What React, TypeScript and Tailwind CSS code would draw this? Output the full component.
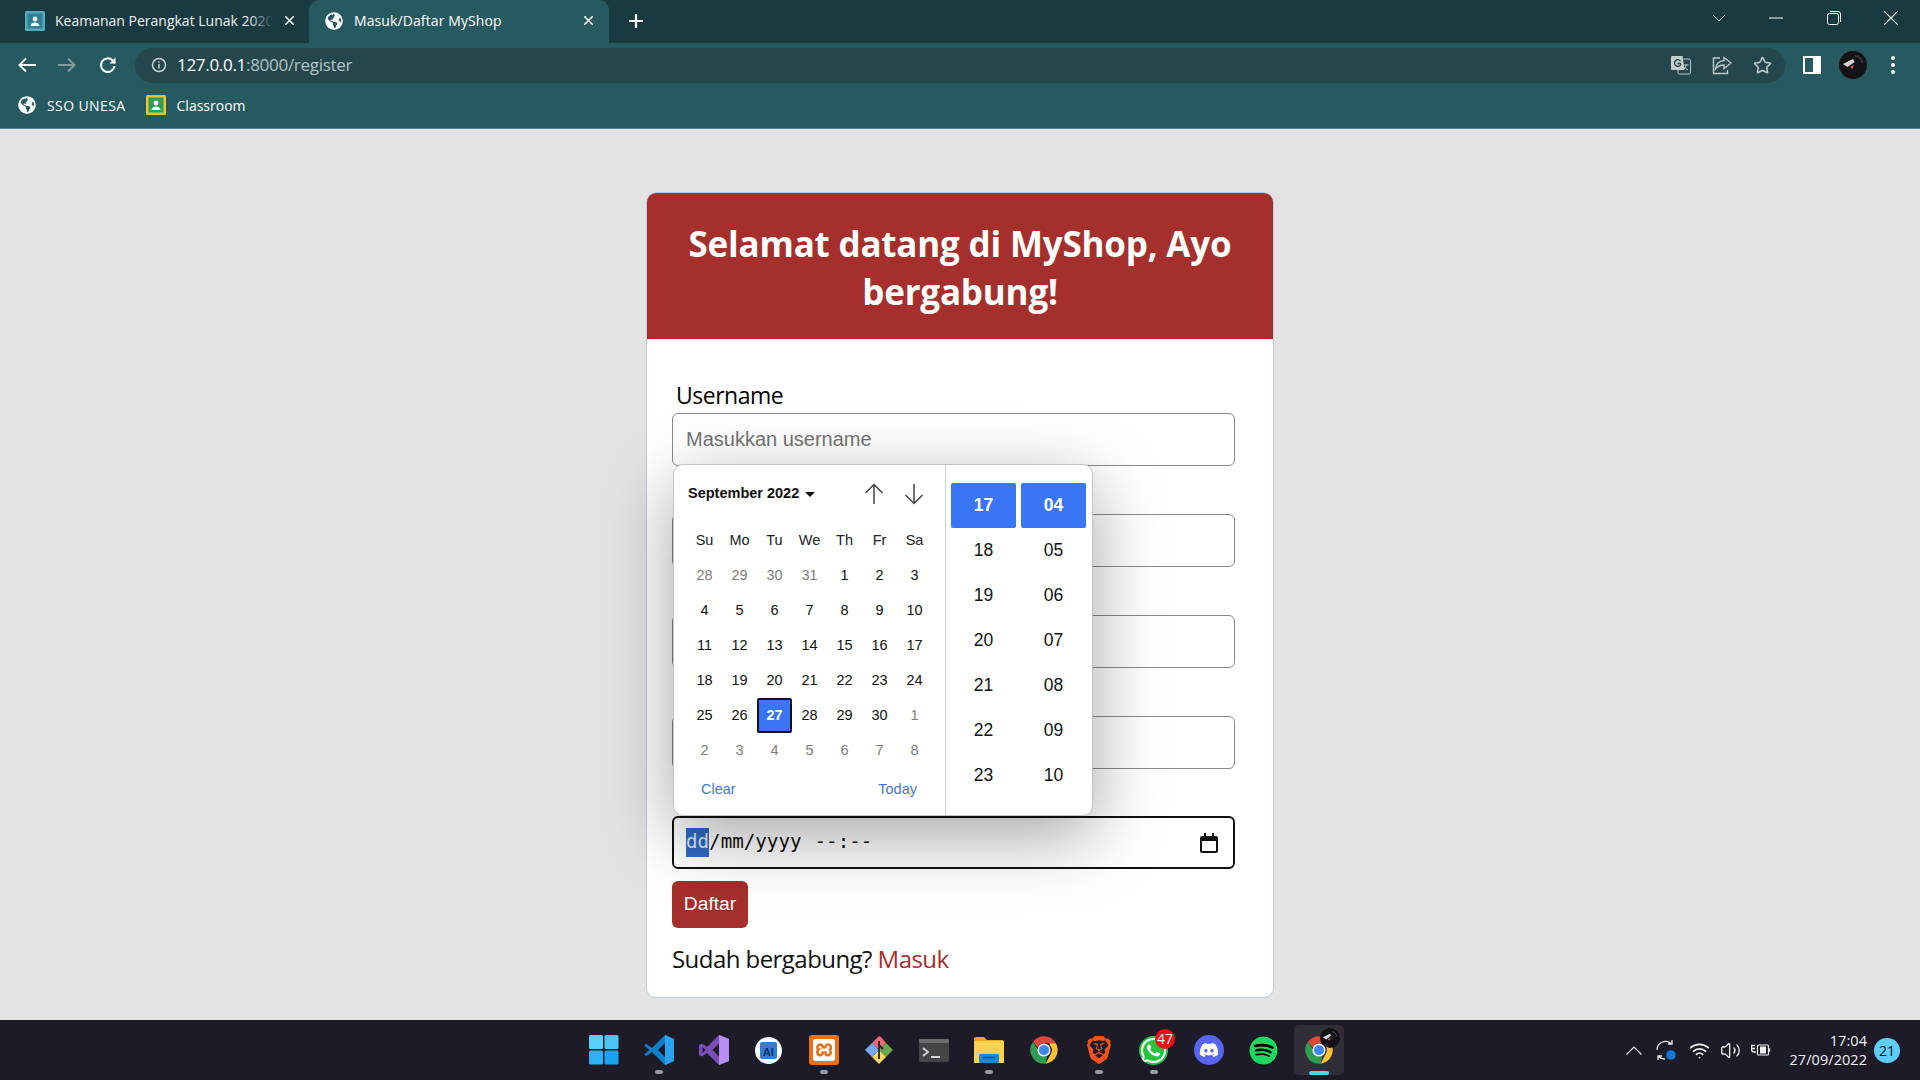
import { FaDiscord, FaGlobeAmericas, FaSpotify, FaWhatsapp } from "react-icons/fa";
import { SiBrave, SiXampp } from "react-icons/si";
import { Star, Volume2, Wifi, X } from "lucide-react";

const segoe = "font-['Open_Sans','Noto_Sans',sans-serif]";
const arial = "font-['Liberation_Sans',Arial,sans-serif]";

const weeks = [
  ["28", "29", "30", "31", "1", "2", "3"],
  ["4", "5", "6", "7", "8", "9", "10"],
  ["11", "12", "13", "14", "15", "16", "17"],
  ["18", "19", "20", "21", "22", "23", "24"],
  ["25", "26", "27", "28", "29", "30", "1"],
  ["2", "3", "4", "5", "6", "7", "8"],
];

function ClassroomIcon({ frame }: { frame: string }) {
  return (
    <svg width="20" height="20" viewBox="0 0 20 20">
      <rect width="20" height="20" rx="1.5" fill={frame} />
      <rect x="2.5" y="2.5" width="15" height="15" fill={frame === "#f2c230" ? "#2f9e5c" : "#2f7f96"} />
      <circle cx="10" cy="8" r="2.4" fill="#fff" />
      <path d="M5.5 15c.4-2.6 2.2-3.6 4.5-3.6s4.1 1 4.5 3.6z" fill="#fff" />
    </svg>
  );
}

function ChromeIcon({ size = 30 }: { size?: number }) {
  return (
    <svg width={size} height={size} viewBox="0 0 48 48">
      <path d="M24 2a22 22 0 0 1 19 11H24a11 11 0 0 0-10.200 6.900L6.500 10.800A22 22 0 0 1 24 2z" fill="#e0483a" />
      <path d="M43 13a22 22 0 0 1-16.500 32.900L34.900 30A11 11 0 0 0 33 16.500V13z" fill="#f6c236" />
      <path d="M6.500 10.800 15 24.800A11 11 0 0 0 29 33.800L26.500 45.900A22 22 0 0 1 6.500 10.800z" fill="#2f9e50" />
      <circle cx="24" cy="24" r="10.500" fill="#fff" />
      <circle cx="24" cy="24" r="8.200" fill="#3f86ee" />
    </svg>
  );
}

function Avatar({ size }: { size: number }) {
  return (
    <svg width={size} height={size} viewBox="0 0 28 28">
      <circle cx="14" cy="14" r="14" fill="#131215" />
      <path d="M4 13l10-5 1.500 3-7 5z" fill="#d7d7da" />
      <path d="M11 16l4-2-1.500 4z" fill="#d9534f" />
      <path d="M16 5c4 0 6.500 3 7.500 7" stroke="#3c3a40" strokeWidth="1.800" fill="none" />
    </svg>
  );
}

function TaskItem({ children, mark, active }: { children: React.ReactNode; mark?: boolean; active?: boolean }) {
  return (
    <div className="relative flex h-[60px] w-[55px] items-center justify-center">
      {active && <div className="absolute left-[3px] top-[5px] h-[50px] w-[50px] rounded-[5px] bg-[#312e3a]" />}
      <div className="relative flex items-center justify-center">{children}</div>
      {mark && <div className="absolute bottom-[6px] left-[24px] h-[4px] w-[8px] rounded-full bg-[#9b99a1]" />}
      {active && <div className="absolute bottom-[5px] left-[18px] h-[4px] w-[20px] rounded-full bg-[#60cdff]" />}
    </div>
  );
}

function Field({ placeholder, className }: { placeholder?: string; className?: string }) {
  return (
    <input
      placeholder={placeholder}
      className={`block h-[53px] w-[563px] rounded-[6px] border border-[#8a8a8a] bg-white px-[13px] text-[20px] outline-none placeholder:text-[#757575] ${arial} ${className ?? ""}`}
    />
  );
}

function DatePopup() {
  return (
    <div className={`absolute bottom-full left-[-1px] mb-[2px] flex h-[352px] w-[420px] rounded-[10px] border border-[#c4c4c4] bg-white shadow-[0_20px_70px_rgba(0,0,0,0.36)] ${arial}`}>
      <div className="w-[272px] border-r border-[#cfcfcf] pl-[13px]">
        <div className="flex h-[58px] items-center pl-[1px]">
          <span className="text-[14.500px] font-bold text-[#111]">September 2022</span>
          <svg className="ml-[6px]" width="10" height="5" viewBox="0 0 10 5">
            <path d="M0 0h10L5 5z" fill="#111" />
          </svg>
          <div className="ml-auto flex gap-[20px] pr-[21px] text-[#444]">
            <svg width="20" height="22" viewBox="0 0 20 22" fill="none" stroke="currentColor" strokeWidth="1.500">
              <path d="M10 21V1.500M1.500 10 10 1.500l8.500 8.500" />
            </svg>
            <svg width="20" height="22" viewBox="0 0 20 22" fill="none" stroke="currentColor" strokeWidth="1.500">
              <path d="M10 1v19.500M1.500 12l8.500 8.500 8.500-8.500" />
            </svg>
          </div>
        </div>
        <div className="grid w-[245px] grid-cols-7 text-center text-[14.500px]">
          {["Su", "Mo", "Tu", "We", "Th", "Fr", "Sa"].map((d) => (
            <div key={d} className="flex h-[35px] items-center justify-center text-[#222]">
              {d}
            </div>
          ))}
          {weeks.map((week, w) =>
            week.map((d, i) => {
              const muted = (w === 0 && i < 4) || (w === 4 && i === 6) || w === 5;
              if (w === 4 && i === 2) {
                return (
                  <div key={d + w} className="flex h-[35px] items-center justify-center rounded-[2px] border-2 border-[#111] bg-[#3a75f6] font-bold text-white">
                    {d}
                  </div>
                );
              }
              return (
                <div key={d + w + i} className={`flex h-[35px] items-center justify-center ${muted ? "text-[#7d7d7d]" : "text-[#111]"}`}>
                  {d}
                </div>
              );
            }),
          )}
        </div>
        <div className="flex h-[44px] w-[245px] items-center justify-between pl-[14px] pr-[15px] text-[14.500px] text-[#4a76c9]">
          <span>Clear</span>
          <span>Today</span>
        </div>
      </div>
      <div className="flex gap-[5px] pl-[5px] pt-[18px] text-[17.500px] text-[#111]">
        {[
          ["17", "18", "19", "20", "21", "22", "23"],
          ["04", "05", "06", "07", "08", "09", "10"],
        ].map((col) => (
          <div key={col[0]} className="w-[65px]">
            {col.map((n, i) => (
              <div key={n} className={`flex h-[45px] items-center justify-center rounded-[2px] ${i === 0 ? "bg-[#3a75f6] font-bold text-white" : ""}`}>
                {n}
              </div>
            ))}
          </div>
        ))}
      </div>
    </div>
  );
}

export default function App() {
  return (
    <div className="flex h-screen flex-col overflow-hidden bg-[#e3e3e3]">
      {/* browser chrome */}
      <div className={`bg-[#275a60] text-white ${segoe}`}>
        <div className="flex h-[43px] items-center bg-[#193a40]">
          <div className="flex h-[43px] w-[309px] items-center pb-[2px] pl-[25px]">
            <ClassroomIcon frame="#54aabd" />
            <div className="relative ml-[10px] w-[218px] overflow-hidden whitespace-nowrap text-[14px] text-[#eef3f4]">
              Keamanan Perangkat Lunak 2020
              <div className="absolute right-0 top-0 h-full w-[24px] bg-gradient-to-r from-transparent to-[#193a40]" />
            </div>
            <X size={15} strokeWidth={2.500} className="ml-[9px]" />
          </div>
          <div className="flex h-[43px] w-[300px] items-center rounded-t-[10px] bg-[#275a60] pb-[2px] pl-[16px]">
            <FaGlobeAmericas size={18} />
            <span className="ml-[11px] w-[227px] whitespace-nowrap text-[14px] tracking-[0.1px]">Masuk/Daftar MyShop</span>
            <X size={15} strokeWidth={2.500} />
          </div>
          <svg className="mb-[2px] ml-[19px]" width="16" height="16" viewBox="0 0 16 16" stroke="#fff" strokeWidth="2.200">
            <path d="M8 1v14M1 8h14" />
          </svg>
          <div className="mb-[7px] ml-auto flex items-center pr-[22px] text-white">
            <svg width="14" height="8" viewBox="0 0 14 8" fill="none" stroke="#d5dde0" strokeWidth="1">
              <path d="M1 1l6 6 6-6" />
            </svg>
            <svg className="ml-[43px]" width="14" height="2" viewBox="0 0 14 2" stroke="#fff">
              <path d="M0 1h14" />
            </svg>
            <svg className="ml-[44px]" width="14" height="14" viewBox="0 0 14 14" fill="none" stroke="#fff">
              <rect x=".5" y="2.500" width="11" height="11" rx="2" />
              <path d="M3 .5h8a2.500 2.500 0 0 1 2.500 2.500v8" />
            </svg>
            <svg className="ml-[43px]" width="14" height="14" viewBox="0 0 14 14" stroke="#fff" strokeWidth="1.100">
              <path d="M0 0l14 14M14 0 0 14" />
            </svg>
          </div>
        </div>
        <div className="flex h-[46px] items-center pl-[18px] pb-[2px]">
          <svg width="18" height="16" viewBox="0 0 18 16" fill="none" stroke="#fff" strokeWidth="2">
            <path d="M18 8H2M8 1.500 1.500 8 8 14.500" />
          </svg>
          <svg className="ml-[22px]" width="18" height="16" viewBox="0 0 18 16" fill="none" stroke="#7f9ca0" strokeWidth="2">
            <path d="M0 8h16M10 1.500 16.500 8 10 14.500" />
          </svg>
          <svg className="ml-[23px]" width="18" height="18" viewBox="0 0 18 18" fill="none" stroke="#fff" strokeWidth="2">
            <path d="M15.500 10a6.800 6.800 0 1 1-1.800-5.500L16 7" />
            <path d="M16.500 1.500V7.500H10.500" fill="#fff" stroke="none" />
          </svg>
          <div className="ml-[18px] flex h-[35px] w-[1650px] items-center rounded-full bg-[#24474e] pl-[16px]">
            <svg width="16" height="16" viewBox="0 0 16 16" fill="none" stroke="#c6cfd1" strokeWidth="1.500">
              <circle cx="8" cy="8" r="6.500" />
              <path d="M8 7v4.500M8 4.200v1.500" />
            </svg>
            <span className="ml-[10px] text-[17px] tracking-[-0.3px]">
              127.0.0.1<span className="text-[#b5c1c4]">:8000/register</span>
            </span>
            <div className="ml-auto flex items-center gap-[21px] pr-[13px] text-[#bfc8ca]">
              <svg width="20" height="20" viewBox="0 0 20 20">
                <rect x="7" y="4" width="12.500" height="15" rx="1.500" fill="none" stroke="#bfc8ca" />
                <path d="M1.500 1h10l2 14h-12.500a1 1 0 0 1-1-1V2a1 1 0 0 1 1-1z" fill="#c6cdcf" />
                <path d="M10 8.500H6.500M9.500 6a3.300 3.300 0 1 0 .5 3" fill="none" stroke="#24474e" strokeWidth="1.300" />
                <path d="M12.500 10h5M15 9v1.500c-.5 2-1.500 3.500-3 4.500M13.500 12c.8 1.300 2 2.300 3.500 3" fill="none" stroke="#bfc8ca" />
              </svg>
              <svg width="20" height="20" viewBox="0 0 20 20" fill="none" stroke="#bfc8ca" strokeWidth="1.400">
                <path d="M12 2.500 19 8l-7 5.500V10C8 10 5.500 11.500 3.500 14c.5-4.500 3.500-8 8.500-8.500z" />
                <path d="M8 3H1.500v15.500h14V15" />
              </svg>
              <Star size={19} strokeWidth={2} />
            </div>
          </div>
          <div className="ml-[18px] h-[18px] w-[18px] border-y-[2px] border-l-[2px] border-r-[8px] border-white" />
          <div className="ml-[18px] flex">
            <Avatar size={28} />
          </div>
          <div className="ml-[24px] flex flex-col gap-[3px]">
            <div className="h-[4px] w-[4px] rounded-full bg-white" />
            <div className="h-[4px] w-[4px] rounded-full bg-white" />
            <div className="h-[4px] w-[4px] rounded-full bg-white" />
          </div>
        </div>
        <div className="flex h-[40px] items-center border-b border-[#4d858c] pb-[7px] pl-[18px] text-[14px]">
          <FaGlobeAmericas size={18} />
          <span className="ml-[11px] tracking-[0.4px]">SSO UNESA</span>
          <div className="ml-[20px]">
            <ClassroomIcon frame="#f2c230" />
          </div>
          <span className="ml-[11px]">Classroom</span>
        </div>
      </div>

      {/* page */}
      <div className="flex-1">
        <div className="ml-[646px] mt-[63px] w-[628px] rounded-[10px] border border-[#b9c9e6] bg-white">
          <div className={`rounded-t-[9px] bg-[#a52f2c] px-[20px] pb-[23px] pt-[27px] text-center text-[35px] font-bold leading-[48px] tracking-[-0.2px] text-white ${segoe}`}>
            Selamat datang di MyShop, Ayo bergabung!
          </div>
          <div className="px-[25px] pb-[22px] pt-[40px]">
            <label className={`block h-[34px] pl-[4px] text-[23px] leading-[32px] tracking-[-0.5px] text-black ${segoe}`}>Username</label>
            <Field placeholder="Masukkan username" />
            <Field className="mt-[48px]" />
            <Field className="mt-[48px]" />
            <Field className="mt-[48px]" />
            <div className="relative mt-[47px] flex h-[53px] w-[563px] items-center rounded-[6px] border-2 border-[#111] pl-[12px] pr-[15px] font-['DejaVu_Sans_Mono',monospace] text-[19.200px] text-[#111]">
              <span className="bg-[#316ac5] text-[#dfe7f5]">dd</span>
              <span>/mm/yyyy</span>
              <span className="ml-[13px]">--:--</span>
              <svg className="ml-auto" width="18" height="20" viewBox="0 0 18 20">
                <path d="M2 3h14a2 2 0 0 1 2 2v13a2 2 0 0 1-2 2H2a2 2 0 0 1-2-2V5a2 2 0 0 1 2-2zm0 5v10h14V8z" fill="#111" />
                <path d="M4 0h2v4H4zM12 0h2v4h-2z" fill="#111" />
              </svg>
              <DatePopup />
            </div>
            <button type="button" className={`mt-[12px] block h-[47px] w-[76px] rounded-[6px] bg-[#a52f2c] text-[19.200px] text-white ${arial}`}>
              Daftar
            </button>
            <p className={`mt-[15px] text-[24px] leading-[32px] tracking-[-0.55px] text-[#111] ${segoe}`}>
              Sudah bergabung? <a className="text-[#a52f2c]">Masuk</a>
            </p>
          </div>
        </div>
      </div>

      {/* taskbar */}
      <div className={`flex h-[60px] items-center bg-[#1e1b28] pl-[576px] text-white ${segoe}`}>
        <TaskItem>
          <svg width="30" height="30" viewBox="0 0 30 30">
            <rect width="14" height="14" rx="1.500" fill="#5bd0f8" />
            <rect x="15.500" width="14" height="14" rx="1.500" fill="#4cc5f6" />
            <rect y="15.500" width="14" height="14" rx="1.500" fill="#2cb2f4" />
            <rect x="15.500" y="15.500" width="14" height="14" rx="1.500" fill="#1aa3ef" />
          </svg>
        </TaskItem>
        <TaskItem mark>
          <svg width="30" height="30" viewBox="0 0 30 30">
            <path d="M21 0l9 4v22l-9 4L8 17l-5.500 4L0 19.500 5.500 15 0 10.500 2.500 9 8 13zM21 8l-7 7 7 7z" fill="#0e7fcb" />
            <path d="M21 0l9 4v22l-9 4z" fill="#2ba4ee" />
          </svg>
        </TaskItem>
        <TaskItem>
          <svg width="30" height="30" viewBox="0 0 30 30">
            <path d="M20 0l10 4v22l-10 4L8 18l-5 3.500L0 20V10l3-1.500L8 12zM20 8.500 13.500 15l6.500 6.500zM3.500 12v6L6.500 15z" fill="#7b4fb5" />
            <path d="M20 0l10 4v22l-10 4z" fill="#b98cf0" />
          </svg>
        </TaskItem>
        <TaskItem>
          <div className="flex h-[27px] w-[27px] items-center justify-center rounded-full bg-white">
            <div className="flex h-[17px] w-[17px] items-end justify-center rounded-[2px] bg-[#2f7fd8] text-[11px] font-bold leading-[14px] text-[#10305e]">AI</div>
          </div>
        </TaskItem>
        <TaskItem mark>
          <div className="flex h-[30px] w-[30px] items-center justify-center rounded-[3px] bg-[#e3741f]">
            <SiXampp size={22} color="#fff" />
          </div>
        </TaskItem>
        <TaskItem>
          <svg width="30" height="30" viewBox="0 0 30 30">
            <path d="M15 15 8 8l7-7 2 1 5 6z" fill="#ee6a73" />
            <path d="M15 15l7-7 7 7-7 7z" fill="#6aa84f" />
            <path d="M15 15l7 7-7 7-7-7z" fill="#f6d860" />
            <path d="M15 15l-7 7-7-7 7-7z" fill="#76a7f0" />
            <path d="M15 6v18M15 10l4 4" stroke="#26222c" strokeWidth="1.800" fill="none" />
          </svg>
        </TaskItem>
        <TaskItem>
          <svg width="30" height="23" viewBox="0 0 30 23">
            <rect width="30" height="23" rx="2" fill="#454548" />
            <rect width="30" height="4" rx="1" fill="#6c6c6e" />
            <path d="M4 9l5 4-5 4" stroke="#d8d8d8" strokeWidth="1.800" fill="none" />
            <path d="M12 18h9" stroke="#e8e8e8" strokeWidth="1.800" />
          </svg>
        </TaskItem>
        <TaskItem mark>
          <svg width="30" height="26" viewBox="0 0 30 26">
            <path d="M0 2a2 2 0 0 1 2-2h8l3 3h15a2 2 0 0 1 2 2v21H0z" fill="#e6a91e" />
            <rect y="4" width="30" height="22" rx="1" fill="#fad24f" />
            <rect x="5" y="17" width="20" height="9" rx="1.500" fill="#1b86d8" />
            <path d="M9 20.500h12" stroke="#0b4f92" strokeWidth="1.500" />
          </svg>
        </TaskItem>
        <TaskItem>
          <ChromeIcon />
        </TaskItem>
        <TaskItem mark>
          <SiBrave size={28} color="#f1501f" />
        </TaskItem>
        <TaskItem mark>
          <FaWhatsapp size={29} color="#fff" className="rounded-full bg-[#27c23f]" />
          <div className="absolute left-[16px] top-[-7px] flex h-[20px] w-[20px] items-center justify-center rounded-full bg-[#ef0f14] text-[14px] leading-none">47</div>
        </TaskItem>
        <TaskItem>
          <div className="flex h-[30px] w-[30px] items-center justify-center rounded-full bg-[#5865f2]">
            <FaDiscord size={20} color="#fff" />
          </div>
        </TaskItem>
        <TaskItem>
          <div className="flex h-[29px] w-[29px] items-center justify-center rounded-full bg-black">
            <FaSpotify size={29} color="#1ed760" />
          </div>
        </TaskItem>
        <TaskItem active>
          <ChromeIcon />
          <div className="absolute left-[16px] top-[-7px] flex">
            <Avatar size={20} />
          </div>
        </TaskItem>

        <div className="ml-auto flex items-center pr-[20px]">
          <svg width="16" height="9" viewBox="0 0 16 9" fill="none" stroke="#e4e4e6" strokeWidth="1.200">
            <path d="M.5 8.500 8 1l7.500 7.500" />
          </svg>
          <svg className="ml-[13px]" width="22" height="22" viewBox="0 0 22 22" fill="none" stroke="#e6e6e8" strokeWidth="1.300">
            <path d="M2 11a8.500 8.500 0 0 1 14-6.500M17 1v4h-4" />
            <path d="M3 21v-4h4M3.500 17.500A8.500 8.500 0 0 0 10 20" />
            <circle cx="16" cy="16" r="4.800" fill="#0f78d4" stroke="none" />
          </svg>
          <Wifi size={21} color="#eee" className="ml-[12px]" />
          <Volume2 size={21} color="#eee" strokeWidth={1.500} className="ml-[10px]" />
          <svg className="ml-[10px]" width="20" height="16" viewBox="0 0 20 16" fill="none" stroke="#eee" strokeWidth="1.200">
            <path d="M0 3.500h4M0 6.500h4M.5 3v4c0 2 1 3 2.500 3h2" strokeWidth="1.500" />
            <rect x="6.500" y="3" width="11" height="10" rx="1" />
            <rect x="9" y="4.500" width="6" height="7" fill="#eee" stroke="none" />
            <path d="M18.500 6.500v3" strokeWidth="1.500" />
          </svg>
          <div className="ml-[19px] text-right text-[14.500px] leading-[19px] tracking-[0.05px] text-[#eee]">
            <div>17:04</div>
            <div>27/09/2022</div>
          </div>
          <div className="ml-[7px] flex h-[25px] w-[26px] items-center justify-center rounded-full bg-[#60cdff] text-[14px] text-[#111]">21</div>
        </div>
      </div>
    </div>
  );
}
